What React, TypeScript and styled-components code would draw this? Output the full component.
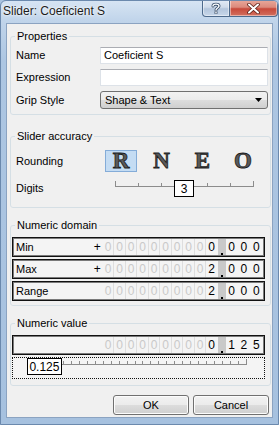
import React from "react"
import styled, { createGlobalStyle } from "styled-components"

const GlobalStyle = createGlobalStyle`
  html, body { margin: 0; padding: 0; background: #a9c3e0; }
  body { font-family: "Liberation Sans", Arial, sans-serif; font-size: 11px; color: #000; }
  * { box-sizing: border-box; }
`

const Window = styled.div`
  width: 279px;
  height: 425px;
  display: flex;
  flex-direction: column;
  border: 1px solid #6b89ad;
  border-radius: 6px 6px 0 0;
  background: linear-gradient(180deg, #d6e4f3 0px, #c0d4ea 20px, #adc6e2 60px, #a6c1df 100%);
  overflow: hidden;
`

const TitleBar = styled.div`
  height: 22px;
  display: flex;
  align-items: flex-start;
  justify-content: space-between;
  padding-left: 2px;
`

const Title = styled.span`
  font-size: 12px;
  line-height: 14px;
  margin-top: 3px;
  color: #1b1b1b;
  text-shadow: 0 0 5px #fff, 0 0 2px #fff;
`

const Caption = styled.div`
  display: flex;
  margin-top: -1px;
`

const CaptionButton = styled.div<{ $close?: boolean }>`
  width: ${(p) => (p.$close ? "48px" : "28px")};
  height: 17px;
  display: flex;
  align-items: center;
  justify-content: center;
  border: 1px solid #4d6a8c;
  border-top: none;
  border-left: ${(p) => (p.$close ? "none" : "1px solid #4d6a8c")};
  border-radius: ${(p) => (p.$close ? "0 0 4px 0" : "0 0 0 4px")};
  background: ${(p) =>
    p.$close
      ? "linear-gradient(180deg, #e9a99b 0%, #dc8a7c 45%, #c8493a 55%, #d2705f 100%)"
      : "linear-gradient(180deg, #e3ebf5 0%, #cfdbea 45%, #b3c5dc 55%, #c8d7ea 100%)"};
  box-shadow: inset 0 0 0 1px rgba(255, 255, 255, 0.45);
`

const Client = styled.div`
  flex: 1;
  margin: 0 5px 6px 5px;
  border: 1px solid #8ba3c1;
  background: #f0f0f0;
  display: flex;
  flex-direction: column;
  padding: 6px 1px 0 3px;
`

const Group = styled.fieldset<{ $mt?: number; $pad: string }>`
  margin: ${(p) => p.$mt ?? 0}px 0 0 0;
  padding: ${(p) => p.$pad};
  border: 1px solid #d5dfe5;
  border-radius: 3px;
  min-width: 0;
`

const Legend = styled.legend<{ $ml?: number }>`
  padding: 0 2px;
  margin-left: ${(p) => p.$ml ?? -1}px;
  font-size: 11px;
  line-height: 13px;
`

const FormGrid = styled.div`
  display: grid;
  grid-template-columns: 84px 1fr;
  row-gap: 5px;
  align-items: center;
`

const Label = styled.span`
  font-size: 11px;
  line-height: 13px;
`

const TextBox = styled.div`
  height: 17px;
  background: #fff;
  border: 1px solid #dde2e8;
  border-top-color: #abadb3;
  padding: 0 3px;
  font-size: 11px;
  line-height: 15px;
`

const Combo = styled.div`
  height: 18px;
  display: flex;
  align-items: center;
  justify-content: space-between;
  padding: 0 5px 0 4px;
  border: 1px solid #707070;
  border-radius: 3px;
  background: linear-gradient(180deg, #f2f2f2 0%, #ebebeb 50%, #dddddd 50%, #cfcfcf 100%);
  font-size: 11px;
`

const AccuracyGrid = styled.div`
  display: grid;
  grid-template-columns: 89px 1fr;
  row-gap: 8px;
  align-items: center;
`

const Letters = styled.div`
  width: 154px;
  display: flex;
  justify-content: space-between;
`

const Letter = styled.span<{ $active?: boolean }>`
  width: 32px;
  height: 22px;
  display: flex;
  align-items: center;
  justify-content: center;
  font-family: "Liberation Serif", "Times New Roman", serif;
  font-weight: bold;
  font-size: 23px;
  line-height: 22px;
  color: #5a5a5a;
  -webkit-text-stroke: 0.8px #1c1c1c;
  background: ${(p) => (p.$active ? "#c4dcf3" : "transparent")};
  border: 1px solid ${(p) => (p.$active ? "#84acd8" : "transparent")};
`

const SliderBox = styled.div<{ $h: number }>`
  position: relative;
  flex: 1;
  height: ${(p) => p.$h}px;
`

const Thumb = styled.div<{ $w: number; $h: number }>`
  position: absolute;
  top: 0;
  width: ${(p) => p.$w}px;
  height: ${(p) => p.$h}px;
  background: #fff;
  border: 1px solid #000;
  display: flex;
  align-items: center;
  justify-content: center;
  font-size: 12px;
`

const Rows = styled.div`
  display: flex;
  flex-direction: column;
  gap: 2px;
`

const NumRow = styled.div<{ $focus?: boolean }>`
  height: ${(p) => (p.$focus ? "22px" : "20px")};
  display: flex;
  align-items: stretch;
  border: 1px ${(p) => (p.$focus ? "dotted" : "solid")} #111;
  box-shadow: ${(p) => (p.$focus ? "none" : "inset 0 0 0 1px #7a7a7a")};
  background: #f4f4f4;
  padding: ${(p) => (p.$focus ? "0" : "1px")};
`

const RowLabel = styled.span`
  flex: 1;
  padding-left: 2px;
  font-size: 11px;
  line-height: 16px;
`

const Digits = styled.div`
  display: flex;
`

const Cell = styled.span<{ $lead?: boolean; $w?: number }>`
  width: ${(p) => p.$w ?? 11.5}px;
  text-align: center;
  font-size: 12px;
  line-height: 16px;
  color: ${(p) => (p.$lead ? "#c9c9c9" : "#000")};
  border-right: 1px solid ${(p) => (p.$lead ? "#dedede" : "transparent")};
`

const DotCell = styled.span`
  width: 8px;
  background: #c9c9c9;
  display: flex;
  align-items: flex-end;
  justify-content: center;
`

const Dot = styled.span`
  width: 2px;
  height: 2px;
  background: #000;
`

const ButtonBar = styled.div`
  margin-top: 9px;
  display: flex;
  justify-content: flex-end;
  gap: 4px;
  padding-right: 2px;
`

const Button = styled.button`
  width: 76px;
  height: 20px;
  padding: 0;
  border: 1px solid #707070;
  border-radius: 3px;
  background: linear-gradient(180deg, #f2f2f2 0%, #ebebeb 50%, #dddddd 50%, #cfcfcf 100%);
  box-shadow: inset 0 0 0 1px #fcfcfc;
  font-family: "Liberation Sans", Arial, sans-serif;
  font-size: 11px;
  color: #000;
`

type TickProps = { width: number; height: number; x0: number; x1: number; y: number; count: number }

const Track = ({ width, height, x0, x1, y, count }: TickProps) => {
  const ticks = []
  for (let i = 0; i <= count; i++) {
    const x = Math.round(x0 + ((x1 - x0) * i) / count) + 0.5
    const end = i === 0 || i === count
    ticks.push(<line key={i} x1={x} x2={x} y1={y - (end ? 5 : 3)} y2={y} stroke="#8c8c8c" />)
  }
  return (
    <svg width={width} height={height} style={{ display: "block" }}>
      <line x1={x0} x2={x1 + 1} y1={y + 0.5} y2={y + 0.5} stroke="#8c8c8c" />
      {ticks}
    </svg>
  )
}

type DigitRowProps = { label?: string; plus?: boolean; whole: string; frac: string }

const DigitRow = ({ label, plus, whole, frac }: DigitRowProps) => {
  const lead = 9
  return (
    <NumRow>
      <RowLabel>{label}</RowLabel>
      <Digits>
        <Cell $w={10}>{plus ? "+" : ""}</Cell>
        {Array.from({ length: lead }).map((_, i) => (
          <Cell key={i} $lead>
            0
          </Cell>
        ))}
        <Cell>{whole}</Cell>
        <DotCell>
          <Dot />
        </DotCell>
        {frac.split("").map((d, i) => (
          <Cell key={i} $w={12.4}>
            {d}
          </Cell>
        ))}
      </Digits>
    </NumRow>
  )
}

export default function App() {
  const digitsValue = 3
  const digitsMax = 6
  const valueFrac = 0.125 / 2

  return (
    <>
      <GlobalStyle />
      <Window>
        <TitleBar>
          <Title>Slider: Coeficient S</Title>
          <Caption>
            <CaptionButton>
              <svg width="10" height="12" viewBox="0 0 10 12">
                <path
                  d="M2 4 C2 1.5 8 1.5 8 4 C8 6 5 6 5 8 M5 10 L5 11"
                  fill="none"
                  stroke="#3d536e"
                  strokeWidth="3"
                  strokeLinecap="round"
                />
                <path
                  d="M2 4 C2 1.5 8 1.5 8 4 C8 6 5 6 5 8 M5 10 L5 11"
                  fill="none"
                  stroke="#fff"
                  strokeWidth="1.4"
                  strokeLinecap="round"
                />
              </svg>
            </CaptionButton>
            <CaptionButton $close>
              <svg width="13" height="11" viewBox="0 0 13 11">
                <path d="M2 1.5 L11 9.5 M11 1.5 L2 9.5" stroke="#5a1f17" strokeWidth="3.6" strokeLinecap="round" />
                <path d="M2 1.5 L11 9.5 M11 1.5 L2 9.5" stroke="#fff" strokeWidth="2" strokeLinecap="round" />
              </svg>
            </CaptionButton>
          </Caption>
        </TitleBar>

        <Client>
          <Group $pad="4px 2px 5px 5px">
            <Legend>Properties</Legend>
            <FormGrid>
              <Label>Name</Label>
              <TextBox>Coeficient S</TextBox>
              <Label>Expression</Label>
              <TextBox />
              <Label>Grip Style</Label>
              <Combo>
                <span>Shape &amp; Text</span>
                <svg width="7" height="4" viewBox="0 0 7 4">
                  <polygon points="0,0 7,0 3.5,4" fill="#000" />
                </svg>
              </Combo>
            </FormGrid>
          </Group>

          <Group $mt={15} $pad="7px 2px 10px 5px">
            <Legend>Slider accuracy</Legend>
            <AccuracyGrid>
              <Label>Rounding</Label>
              <Letters>
                <Letter $active>R</Letter>
                <Letter>N</Letter>
                <Letter>E</Letter>
                <Letter>O</Letter>
              </Letters>
              <Label>Digits</Label>
              <SliderBox $h={17}>
                <Track width={163} height={17} x0={10} x1={148} y={6} count={6} />
                <Thumb $w={20} $h={17} style={{ left: 10 + (138 * digitsValue) / digitsMax - 10 }}>
                  {digitsValue}
                </Thumb>
              </SliderBox>
            </AccuracyGrid>
          </Group>

          <Group $mt={11} $pad="5px 5px 4px 1px">
            <Legend $ml={3}>Numeric domain</Legend>
            <Rows>
              <DigitRow label="Min" plus whole="0" frac="000" />
              <DigitRow label="Max" plus whole="2" frac="000" />
              <DigitRow label="Range" whole="2" frac="000" />
            </Rows>
          </Group>

          <Group $mt={11} $pad="5px 5px 6px 1px">
            <Legend $ml={3}>Numeric value</Legend>
            <Rows>
              <DigitRow whole="0" frac="125" />
              <NumRow $focus>
                <SliderBox $h={20}>
                  <Track width={250} height={20} x0={18} x1={233} y={6} count={27} />
                  <Thumb $w={35} $h={17} style={{ left: 18 + 215 * valueFrac - 17.5 }}>
                    0.125
                  </Thumb>
                </SliderBox>
              </NumRow>
            </Rows>
          </Group>

          <ButtonBar>
            <Button>OK</Button>
            <Button>Cancel</Button>
          </ButtonBar>
        </Client>
      </Window>
    </>
  )
}
